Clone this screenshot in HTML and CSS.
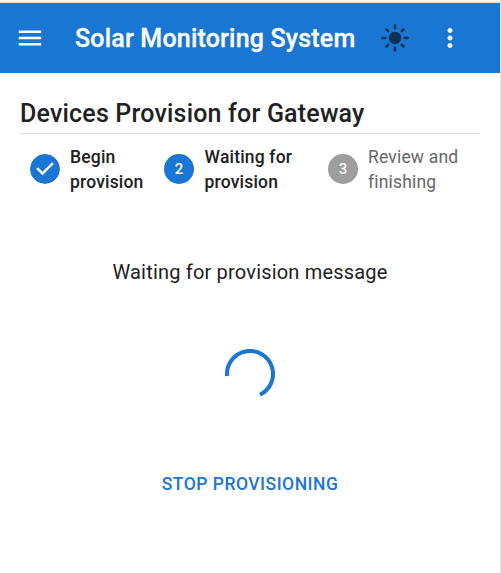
FILE: index.html
```html
<!DOCTYPE html>
<html lang="en">
<head>
<meta charset="utf-8">
<title>Solar Monitoring System</title>
<link rel="stylesheet" href="styles.css">
</head>
<body>
<header class="bar">
  <svg class="menu" viewBox="0 0 24 24"><path d="M3 18h18v-2H3v2zm0-5h18v-2H3v2zm0-7v2h18V6H3z"/></svg>
  <h1 class="brand">Solar Monitoring System</h1>
  <svg class="sun" viewBox="0 0 24 24"><circle cx="12" cy="12" r="5"/><path class="rays" d="M12 2v2.200M12 19.800V22M2 12h2.200M19.800 12H22M5.200 5.200l1.300 1.300M17.500 17.500l1.300 1.300M18.800 5.200l-1.300 1.300M6.500 17.500l-1.300 1.300"/></svg>
  <svg class="more" viewBox="0 0 24 24"><path d="M12 8c1.100 0 2-.9 2-2s-.9-2-2-2-2 .9-2 2 .9 2 2 2zm0 2c-1.100 0-2 .9-2 2s.9 2 2 2 2-.9 2-2-.9-2-2-2zm0 6c-1.100 0-2 .9-2 2s.9 2 2 2 2-.9 2-2-.9-2-2-2z"/></svg>
</header>
<main class="content">
  <h2 class="title">Devices Provision for Gateway</h2>
  <ol class="steps">
    <li class="step step-begin">
      <svg class="badge" viewBox="0 0 24 24"><path d="M12 0a12 12 0 0 0 0 24a12 12 0 0 0 0-24zm-2 17l-5-5 1.400-1.400 3.600 3.600 7.600-7.600L19 8l-9 9z"/></svg>
      <span class="label">Begin<br>provision</span>
    </li>
    <li class="step step-wait">
      <span class="badge">2</span>
      <span class="label">Waiting for<br>provision</span>
    </li>
    <li class="step step-review">
      <span class="badge">3</span>
      <span class="label">Review and<br>finishing</span>
    </li>
  </ol>
  <p class="message">Waiting for provision message</p>
  <svg class="spinner" viewBox="0 0 50 50"><path d="M2.100 27A23 23 0 1 1 35 45.700"/></svg>
  <button class="stop">STOP PROVISIONING</button>
</main>
</body>
</html>
```
FILE: styles.css
```css
* { box-sizing: border-box; }
body {
  margin: 0;
  height: 573px;
  overflow: hidden;
  border-right: 1px solid #e4e4e4;
  background: #fff;
  color: #212121;
  font-family: Roboto, sans-serif;
}
body::before {
  content: "";
  display: block;
  height: 2px;
  border-bottom: 1px solid #dedede;
  background: #f3f3f3;
}
h1, h2, p, ol { margin: 0; padding: 0; }
.bar {
  display: flex;
  align-items: center;
  height: 70px;
  padding-left: 15px;
  background: #1976d2;
  color: #fff;
}
svg { display: block; flex: none; }
.menu, .sun, .more { width: 30px; height: 30px; fill: #fff; }
.brand {
  width: 280px;
  margin-left: 30px;
  padding-top: 1px;
  font-size: 25px;
  font-weight: 500;
  letter-spacing: .19px;
  white-space: nowrap;
  -webkit-text-stroke: .3px #fff;
}
.sun { margin-left: 25px; fill: #0d3256; }
.rays { fill: none; stroke: #0d3256; stroke-width: 2; stroke-linecap: round; }
.more { margin-left: 25px; }
.content {
  display: flex;
  flex-direction: column;
  align-items: center;
  padding: 20px 20px 0;
}
.title {
  width: 460px;
  height: 41px;
  border-bottom: 1px solid #e0e0e0;
  font-size: 25px;
  font-weight: 500;
  line-height: 42px;
  letter-spacing: .19px;
}
.steps {
  display: flex;
  width: 440px;
  margin-top: 10px;
  list-style: none;
}
.step {
  display: flex;
  align-items: center;
  gap: 10px;
  height: 50px;
  font-size: 17.5px;
  font-weight: 500;
  line-height: 25px;
  letter-spacing: .18px;
  white-space: nowrap;
}
.label { padding-top: 2px; }
.step-begin { width: 134px; }
.step-wait { width: 164px; }
.step-wait .label { padding-left: .6px; }
.step-review { color: #666; font-weight: 400; }
.badge {
  display: grid;
  place-items: center;
  width: 30px;
  height: 30px;
  border-radius: 50%;
  background: #1976d2;
  color: #fff;
  font-size: 15px;
  font-weight: 500;
  letter-spacing: 0;
}
svg.badge { background: none; fill: #1976d2; }
.step-review .badge { background: #9e9e9e; }
.message {
  margin-top: 63px;
  font-size: 20px;
  line-height: 30px;
  letter-spacing: .19px;
}
.spinner {
  width: 50px;
  height: 50px;
  margin-top: 62px;
  fill: none;
  stroke: #1976d2;
  stroke-width: 4;
}
.stop {
  margin-top: 63px;
  padding: 7px 10px;
  border: 0;
  background: none;
  color: #1976d2;
  font: 500 17.500px/30px Roboto, sans-serif;
  letter-spacing: .5px;
}
```
